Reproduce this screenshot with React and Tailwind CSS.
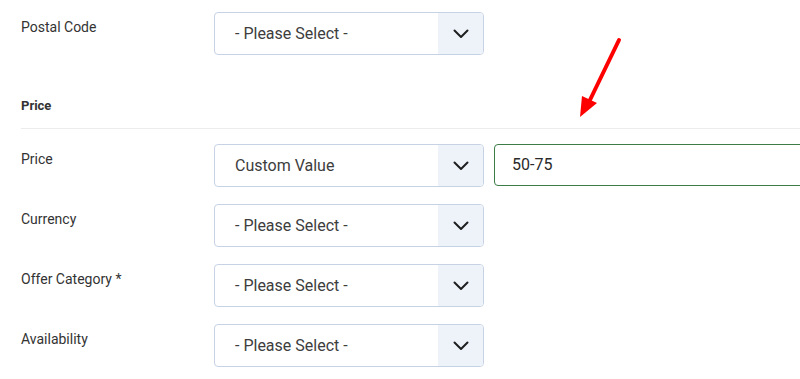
import React from 'react';

function Chevron() {
  return (
    <svg width="16" height="10" viewBox="0 0 16 10" fill="none">
      <polyline points="1.5,1.5 8,8 14.5,1.5" stroke="#1f1f1f" strokeWidth="2" strokeLinecap="round" strokeLinejoin="round" />
    </svg>
  );
}

function Select({ value }) {
  return (
    <div className="flex w-[270px] h-[43px] border border-[#c7d3e4] rounded-[4px] overflow-hidden bg-white shrink-0">
      <div className="flex-1 flex items-center pl-[20px] text-[16px] text-[#3d3d3d]">{value}</div>
      <div className="w-[45px] bg-[#eef3fa] flex items-center justify-center">
        <Chevron />
      </div>
    </div>
  );
}

function Row({ label, children, className = '' }) {
  return (
    <div className={`flex items-start ${className}`}>
      <div className="w-[193px] shrink-0 pt-[5px] text-[14px] leading-[20px] text-[#333]">{label}</div>
      {children}
    </div>
  );
}

export default function App() {
  return (
    <div className="relative w-[800px] h-[379px] overflow-hidden bg-white pt-[12px] pl-[21px]" style={{ fontFamily: 'Roboto, "Noto Sans", sans-serif' }}>
      <Row label="Postal Code">
        <Select value="- Please Select -" />
      </Row>

      <div className="mt-[41px] pb-[12px] border-b border-[#ececec] text-[13px] leading-[20px] font-bold text-[#333]">
        Price
      </div>

      <div className="mt-[15px] flex flex-col gap-[17px]">
        <Row label="Price">
          <Select value="Custom Value" />
          <div className="ml-[10px] w-[340px] h-[42px] shrink-0 border border-[#3c7d46] rounded-[4px] flex items-center pl-[17px] text-[16px] text-[#2a2a2a]">
            50-75
          </div>
        </Row>
        <Row label="Currency">
          <Select value="- Please Select -" />
        </Row>
        <Row label="Offer Category *">
          <Select value="- Please Select -" />
        </Row>
        <Row label="Availability">
          <Select value="- Please Select -" />
        </Row>
      </div>

      {/* annotation arrow */}
      <svg className="absolute left-0 top-0 pointer-events-none" width="800" height="379">
        <line x1="619" y1="40" x2="589" y2="102" stroke="#ff0000" strokeWidth="4" strokeLinecap="round" />
        <polygon points="580,117 582,96 597,103" fill="#ff0000" />
      </svg>
    </div>
  );
}
